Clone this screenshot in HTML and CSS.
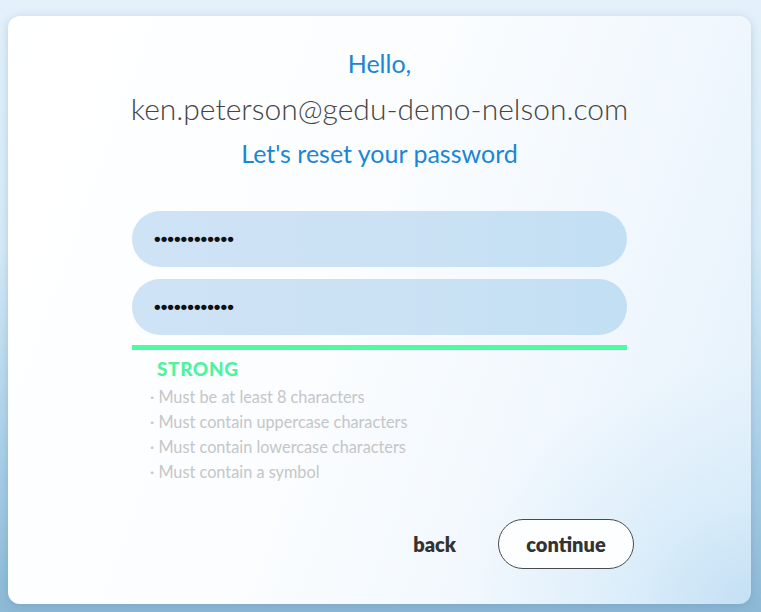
FILE: index.html
```html
<!DOCTYPE html>
<html>
<head>
<meta charset="utf-8">
<link rel="stylesheet" href="styles.css">
</head>
<body>
<div class="card">
  <div class="heading">
    <div class="hello">Hello,</div>
    <div class="email">ken.peterson@gedu-demo-nelson.com</div>
    <div class="sub">Let's reset your password</div>
  </div>
  <div class="form">
    <div class="field">••••••••••••</div>
    <div class="field">••••••••••••</div>
    <div class="meter"></div>
    <div class="strength">STRONG</div>
    <ul class="rules">
      <li>· Must be at least 8 characters</li>
      <li>· Must contain uppercase characters</li>
      <li>· Must contain lowercase characters</li>
      <li>· Must contain a symbol</li>
    </ul>
  </div>
  <div class="actions">
    <button class="back">back</button>
    <button class="continue">continue</button>
  </div>
</div>
</body>
</html>
```
FILE: styles.css
```css
html, body { margin: 0; padding: 0; }
body {
  width: 761px;
  height: 612px;
  overflow: hidden;
  font-family: "Lato", "Open Sans", sans-serif;
  background: linear-gradient(180deg, #e4f1fb 0%, #d6ebf8 40%, #a9cfe8 75%, #8db9d6 100%);
  padding: 16px 10px 8px 8px;
  box-sizing: border-box;
}
.card {
  height: 588px;
  border-radius: 12px;
  background:
    radial-gradient(ellipse 280px 240px at 100% 100%, #c4e0f4 0%, rgba(212,234,249,0.65) 45%, rgba(255,255,255,0) 100%),
    linear-gradient(110deg, #ffffff 0%, #fbfdff 45%, #eef6fd 80%, #e2f0fb 100%);
  box-shadow: 0 2px 10px rgba(60,110,150,0.25);
  box-sizing: border-box;
  padding-top: 30px;
  display: flex;
  flex-direction: column;
  align-items: center;
}
.heading { text-align: center; }
.hello {
  color: #1a86d4;
  font-size: 25px;
  line-height: 34px;
}
.email {
  color: #444;
  font-size: 30px;
  font-weight: 300;
  line-height: 56px;
}
.sub {
  color: #1a86d4;
  font-size: 25px;
  line-height: 34px;
}
.form {
  width: 495px;
  margin-top: 41px;
}
.field {
  height: 56px;
  border-radius: 28px;
  background: linear-gradient(90deg, #cee3f5 0%, #cbe2f4 50%, #c2dff3 100%);
  margin-bottom: 12px;
  padding-left: 22px;
  box-sizing: border-box;
  display: flex;
  align-items: center;
  font-family: "Liberation Sans", Arial, sans-serif;
  font-weight: 700;
  font-size: 19px;
  color: #111;
}
.meter {
  height: 5px;
  background: #4cfca0;
  margin-top: -2px;
}
.strength {
  color: #4df49d;
  font-weight: 900;
  font-size: 19px;
  letter-spacing: 0.6px;
  margin: 7px 0 0 25px;
  line-height: 24px;
}
.rules {
  list-style: none;
  margin: 3px 0 0 18px;
  padding: 0;
  color: #c4c6c8;
  font-size: 16.3px;
  line-height: 25px;
}
.actions {
  margin-top: auto;
  margin-bottom: 35px;
  align-self: flex-end;
  margin-right: 117px;
  display: flex;
  align-items: center;
  gap: 42px;
}
button {
  font-family: "Lato", sans-serif;
  font-weight: 800;
  font-size: 20px;
  color: #333;
  cursor: pointer;
}
.back {
  background: none;
  border: none;
  padding: 0;
}
.continue {
  width: 136px;
  height: 50px;
  border-radius: 25px;
  border: 1px solid #4a4a4a;
  background: #fdfeff;
}
```
